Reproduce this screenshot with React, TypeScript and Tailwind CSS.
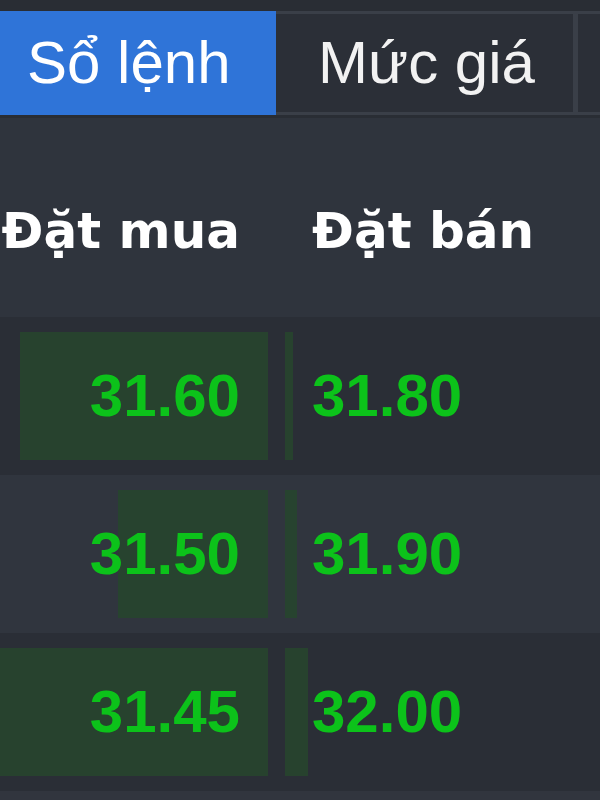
import React from 'react';

type Row = { bid: string; ask: string; bidBar: number; askBar: number; dark: boolean };

const rows: Row[] = [
  { bid: '31.60', ask: '31.80', bidBar: 248, askBar: 8, dark: true },
  { bid: '31.50', ask: '31.90', bidBar: 150, askBar: 12, dark: false },
  { bid: '31.45', ask: '32.00', bidBar: 268, askBar: 23, dark: true },
];

const numFont = { fontFamily: '"Liberation Sans", Arial, sans-serif' };

export default function App() {
  return (
    <div className="w-[600px] h-[800px] overflow-hidden bg-[#2f343d]" style={numFont}>
      {/* Top strip */}
      <div className="h-[11px] bg-[#292d34]" />

      {/* Tabs */}
      <div className="flex h-[104px] border-y-[3px] border-[#3a3f48] bg-[#2b2f37]">
        <div className="w-[276px] -my-[3px] flex items-center pl-[27px] bg-[#2f74d8] text-white text-[60px] leading-none">
          Sổ lệnh
        </div>
        <div className="w-[302px] flex items-center pl-[42px] text-[#f2f2f2] text-[60px] leading-none border-r-[5px] border-[#3a3f48]">
          Mức giá
        </div>
        <div className="flex-1" />
      </div>
      <div className="h-[3px] bg-[#292d34]" />

      {/* Header */}
      <div
        className="flex h-[199px] pt-[88px] text-white font-bold text-[50px] leading-none"
        style={{ fontFamily: '"DejaVu Sans", Verdana, sans-serif' }}
      >
        <div className="w-[268px] pr-[28px] flex justify-end whitespace-nowrap">Đặt mua</div>
        <div className="w-[17px]" />
        <div className="flex-1 pl-[27px] whitespace-nowrap">Đặt bán</div>
      </div>

      {/* Rows */}
      {rows.map((r, i) => (
        <div key={i} className={`flex h-[158px] py-[15px] ${r.dark ? 'bg-[#2a2e36]' : 'bg-[#30353e]'}`}>
          <div className="relative w-[268px] flex items-center justify-end pr-[28px]">
            <div
              className="absolute right-0 top-0 bottom-0 bg-[#27452e]/90"
              style={{ width: r.bidBar }}
            />
            <span className="relative text-[#0cc21a] font-bold text-[60px] leading-none">{r.bid}</span>
          </div>
          <div className="w-[17px]" />
          <div className="relative flex-1 flex items-center pl-[27px]">
            <div
              className="absolute left-0 top-0 bottom-0 bg-[#27452e]/90"
              style={{ width: r.askBar }}
            />
            <span className="relative text-[#0cc21a] font-bold text-[60px] leading-none">{r.ask}</span>
          </div>
        </div>
      ))}
      <div className="h-[20px] bg-[#31353e]" />
    </div>
  );
}
